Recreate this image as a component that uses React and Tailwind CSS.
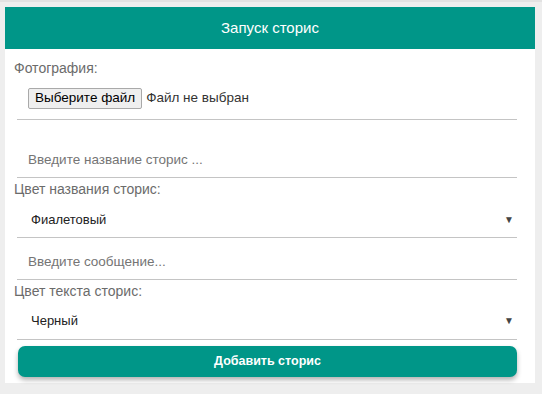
export default function App() {
  return (
    <div className="min-h-[394px] w-[542px] bg-[#eeeeee] border-t-2 border-[#e2e2e2] pt-[5px] pl-[5px] pr-[7px] pb-[11px] font-['Liberation_Sans',Arial,sans-serif]">
      <div className="bg-white">
        {/* Шапка */}
        <div className="h-[42px] bg-[#009688] flex items-center justify-center text-white text-[15px]">
          Запуск сторис
        </div>

        <div className="pl-[9px] pr-[18px] pb-[6px]">
          <div className="pt-[10px] text-[14px] text-[#6b6b6b] leading-[18px]">Фотография:</div>

          <div className="ml-[3px] h-[43px] border-b border-[#c4c4c4] flex items-center pl-[11px]">
            <button className="h-[21px] px-[6px] border border-[#a9a9a9] bg-[#efefef] rounded-[2px] text-[13.5px] text-black leading-none">
              Выберите файл
            </button>
            <span className="ml-[4px] text-[13.5px] text-[#333]">Файл не выбран</span>
          </div>

          <div className="ml-[3px] h-[58px] pt-[24px] border-b border-[#c4c4c4] flex items-center pl-[11px] text-[13.5px] text-[#757575]">
            Введите название сторис ...
          </div>

          <div className="pt-[2px] text-[14px] text-[#6b6b6b] leading-[18px]">Цвет названия сторис:</div>

          <div className="ml-[3px] h-[40px] pt-[4px] border-b border-[#c4c4c4] flex items-center justify-between pl-[14px] pr-[3px] text-[13px] text-[#222]">
            <span>Фиалетовый</span>
            <span className="text-[10px] text-[#444]">▼</span>
          </div>

          <div className="ml-[3px] h-[42px] border-b border-[#c4c4c4] flex items-center pl-[11px] pt-[7px] text-[13.5px] text-[#757575]">
            Введите сообщение...
          </div>

          <div className="pt-[2px] text-[14px] text-[#6b6b6b] leading-[18px]">Цвет текста сторис:</div>

          <div className="ml-[3px] h-[40px] pt-[2px] border-b border-[#c4c4c4] flex items-center justify-between pl-[14px] pr-[3px] text-[13px] text-[#222]">
            <span>Черный</span>
            <span className="text-[10px] text-[#444]">▼</span>
          </div>

          <button className="mt-[6px] ml-[4px] w-[calc(100%-4px)] h-[31px] rounded-[7px] bg-[#009688] text-white text-[12.5px] font-bold shadow-[0_3px_5px_rgba(0,0,0,0.3)]">
            Добавить сторис
          </button>
        </div>
      </div>
    </div>
  );
}
